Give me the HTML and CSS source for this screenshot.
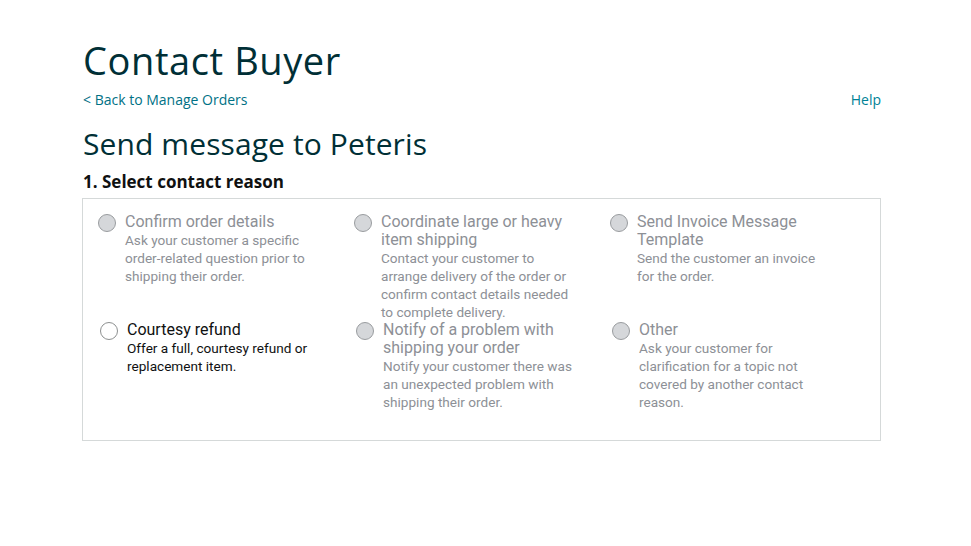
FILE: index.html
```html
<!DOCTYPE html>
<html lang="en">
<head>
    <meta charset="UTF-8">
    <title>Contact Buyer</title>
    <link rel="stylesheet" href="styles.css">
</head>
<body>
    <div class="page">
        <h1>Contact Buyer</h1>
        <div class="nav">
            <a href="#">&lt; Back to Manage Orders</a>
            <a href="#">Help</a>
        </div>
        <h2>Send message to Peteris</h2>
        <h3>1. Select contact reason</h3>
        <div class="reasons">
            <label class="option disabled">
                <span class="radio"></span>
                <span class="text">
                    <span class="title">Confirm order details</span>
                    <span class="desc">Ask your customer a specific order-related question prior to shipping their order.</span>
                </span>
            </label>
            <label class="option disabled">
                <span class="radio"></span>
                <span class="text">
                    <span class="title">Coordinate large or heavy item shipping</span>
                    <span class="desc">Contact your customer to arrange delivery of the order or confirm contact details needed to complete delivery.</span>
                </span>
            </label>
            <label class="option disabled">
                <span class="radio"></span>
                <span class="text">
                    <span class="title">Send Invoice Message Template</span>
                    <span class="desc">Send the customer an invoice for the order.</span>
                </span>
            </label>
            <label class="option second">
                <span class="radio"></span>
                <span class="text">
                    <span class="title">Courtesy refund</span>
                    <span class="desc">Offer a full, courtesy refund or replacement item.</span>
                </span>
            </label>
            <label class="option disabled second">
                <span class="radio"></span>
                <span class="text">
                    <span class="title">Notify of a problem with shipping your order</span>
                    <span class="desc">Notify your customer there was an unexpected problem with shipping their order.</span>
                </span>
            </label>
            <label class="option disabled second">
                <span class="radio"></span>
                <span class="text">
                    <span class="title">Other</span>
                    <span class="desc">Ask your customer for clarification for a topic not covered by another contact reason.</span>
                </span>
            </label>
        </div>
    </div>
</body>
</html>
```

FILE: styles.css
```css
body {
    font-family: Roboto, "Liberation Sans", Arial, sans-serif;
    color: #0f1111;
    background-color: white;
    margin: 0;
    padding: 0;
}

.page {
    width: 798px;
    margin-left: 83px;
    padding-top: 38px;
}

h1, h2, h3, .nav {
    font-family: "Open Sans", Roboto, sans-serif;
}

h1 {
    font-size: 38px;
    font-weight: 400;
    line-height: 44px;
    letter-spacing: 0.6px;
    margin: 0;
    color: #002f36;
}

.nav {
    display: flex;
    justify-content: space-between;
    font-size: 14px;
    line-height: 20px;
    margin-top: 8px;
}

.nav a {
    color: #007185;
    text-decoration: none;
}

.nav a:last-child {
    color: #008296;
}

h2 {
    font-size: 30px;
    font-weight: 400;
    line-height: 36px;
    letter-spacing: 0.1px;
    margin: 16px 0 0;
    color: #002f36;
}

h3 {
    font-size: 17px;
    font-weight: 700;
    line-height: 22px;
    margin: 9px 0 0;
    color: #0f1111;
}

.reasons {
    display: grid;
    grid-template-columns: repeat(3, 256px);
    margin: 5px 0 0 -1px;
    padding: 14px 15px 29px;
    border: 1px solid #d5d9d9;
}

.option {
    display: flex;
    gap: 9px;
    padding-right: 34px;
}

.option.second {
    padding-left: 2px;
}

.radio {
    flex: none;
    width: 16px;
    height: 16px;
    margin-top: 1px;
    border: 1px solid #8d9090;
    border-radius: 50%;
    background: white;
}

.disabled .radio {
    background: #d5d7da;
    border-color: #999c9f;
}

.text {
    display: flex;
    flex-direction: column;
}

.title {
    font-size: 16px;
    line-height: 18px;
}

.desc {
    font-size: 13.6px;
    line-height: 18px;
}

.disabled .text {
    color: #8d9096;
}
```
